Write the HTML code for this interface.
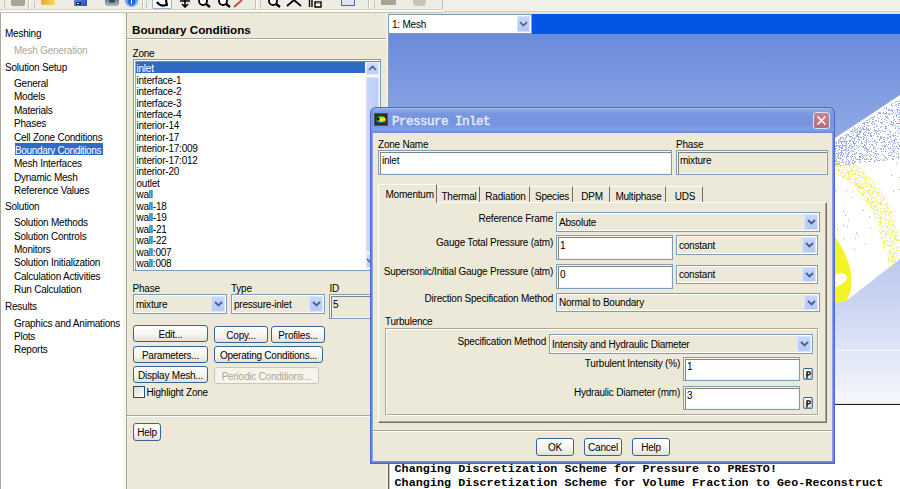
<!DOCTYPE html><html><head><meta charset="utf-8"><style>
*{margin:0;padding:0;box-sizing:content-box}
html,body{width:900px;height:489px;overflow:hidden;background:#ECE9D8;position:relative}
.b{position:absolute}
.t{position:absolute;font-family:"Liberation Sans",sans-serif;font-size:10px;line-height:12px;white-space:nowrap;color:#000;letter-spacing:-0.22px}
.combo{border:1px solid #7F9DB9;font-family:"Liberation Sans",sans-serif;font-size:10px;letter-spacing:-0.22px;box-shadow:inset 0 0 0 1px #fff}
.ctext{position:absolute;left:2px;line-height:12px;white-space:nowrap}
.cbtn{position:absolute;right:1px;top:1px;width:14px;background:linear-gradient(180deg,#C8D7FC 0%,#B4C8F8 100%);border-radius:2px;box-shadow:inset 0 0 0 1px #DCE6FC;display:flex;align-items:center;justify-content:center}
.field{border:1px solid #7F9DB9;font-family:"Liberation Sans",sans-serif;font-size:10px;letter-spacing:-0.22px;box-shadow:inset 1px 1px 0 #F4F4F0,inset 2px 2px 0 #86847A,inset -1px -1px 0 #F4F4F0}
.ftext{position:absolute;left:3px;line-height:12px;white-space:nowrap}
.btn{border:1px solid #3A6496;border-radius:3px;background:linear-gradient(180deg,#FFFFFF 0%,#F4F3EE 60%,#E3E1D6 100%);font-family:"Liberation Sans",sans-serif;font-size:10px;letter-spacing:-0.22px;text-align:center;white-space:nowrap;color:#000}
.dis{border-color:#C9C7BA;background:#F5F4EA;color:#ACA899}
.mono{position:absolute;font-family:"Liberation Mono",monospace;font-weight:bold;font-size:11.7px;line-height:14px;white-space:nowrap;color:#000}
</style></head><body>
<div class="b" style="left:0px;top:0px;width:900px;height:9px;background:#EEEDE4"></div>
<div class="b" style="left:0px;top:9px;width:900px;height:1px;background:#D8D4C4"></div>
<div class="b" style="left:0px;top:10px;width:900px;height:2px;background:#FBFAF6"></div>
<div class="b" style="left:0px;top:12px;width:900px;height:1px;background:#C5C1B0"></div>
<div class="b" style="left:443px;top:0px;width:457px;height:11px;background:#F0EFE8"></div>
<div class="b" style="left:443px;top:11px;width:457px;height:1px;background:#CFCCC0"></div>
<div class="b" style="left:443px;top:12px;width:457px;height:2px;background:#E6E3D4"></div>
<div class="b" style="left:4px;top:1px;width:1px;height:1px;background:#A9A48E"></div>
<div class="b" style="left:4px;top:3px;width:1px;height:1px;background:#A9A48E"></div>
<div class="b" style="left:4px;top:5px;width:1px;height:1px;background:#A9A48E"></div>
<div class="b" style="left:4px;top:7px;width:1px;height:1px;background:#A9A48E"></div>
<div class="b" style="left:28px;top:0px;width:1px;height:9px;background:#C5C1B0"></div>
<div class="b" style="left:29px;top:0px;width:1px;height:9px;background:#FFFFFF"></div>
<div class="b" style="left:34px;top:1px;width:1px;height:1px;background:#A9A48E"></div>
<div class="b" style="left:34px;top:3px;width:1px;height:1px;background:#A9A48E"></div>
<div class="b" style="left:34px;top:5px;width:1px;height:1px;background:#A9A48E"></div>
<div class="b" style="left:34px;top:7px;width:1px;height:1px;background:#A9A48E"></div>
<div class="b" style="left:142px;top:0px;width:1px;height:9px;background:#C5C1B0"></div>
<div class="b" style="left:143px;top:0px;width:1px;height:9px;background:#FFFFFF"></div>
<div class="b" style="left:146px;top:1px;width:1px;height:1px;background:#A9A48E"></div>
<div class="b" style="left:146px;top:3px;width:1px;height:1px;background:#A9A48E"></div>
<div class="b" style="left:146px;top:5px;width:1px;height:1px;background:#A9A48E"></div>
<div class="b" style="left:146px;top:7px;width:1px;height:1px;background:#A9A48E"></div>
<div class="b" style="left:255px;top:0px;width:1px;height:9px;background:#C5C1B0"></div>
<div class="b" style="left:256px;top:0px;width:1px;height:9px;background:#FFFFFF"></div>
<div class="b" style="left:260px;top:1px;width:1px;height:1px;background:#A9A48E"></div>
<div class="b" style="left:260px;top:3px;width:1px;height:1px;background:#A9A48E"></div>
<div class="b" style="left:260px;top:5px;width:1px;height:1px;background:#A9A48E"></div>
<div class="b" style="left:260px;top:7px;width:1px;height:1px;background:#A9A48E"></div>
<div class="b" style="left:368px;top:0px;width:1px;height:9px;background:#C5C1B0"></div>
<div class="b" style="left:369px;top:0px;width:1px;height:9px;background:#FFFFFF"></div>
<div class="b" style="left:374px;top:1px;width:1px;height:1px;background:#A9A48E"></div>
<div class="b" style="left:374px;top:3px;width:1px;height:1px;background:#A9A48E"></div>
<div class="b" style="left:374px;top:5px;width:1px;height:1px;background:#A9A48E"></div>
<div class="b" style="left:374px;top:7px;width:1px;height:1px;background:#A9A48E"></div>
<div class="b" style="left:442px;top:0px;width:1px;height:9px;background:#C5C1B0"></div>
<div class="b" style="left:11px;top:0px;width:14px;height:6px;background:#A8A595;border-radius:0 0 2px 2px"></div>
<div class="b" style="left:41px;top:0px;width:14px;height:5px;background:linear-gradient(90deg,#E8A93A,#F6D55C);border-radius:0 0 2px 2px"></div>
<div class="b" style="left:74px;top:0px;width:13px;height:6px;background:linear-gradient(135deg,#5C86E6,#2B4DB0);border-radius:0 0 1px 1px"></div>
<div class="b" style="left:76px;top:2px;width:5px;height:3px;background:#1E2A55"></div>
<div class="b" style="left:77px;top:3px;width:2px;height:1px;background:#F4F4F4"></div>
<div class="b" style="left:105px;top:0px;width:14px;height:6px;background:linear-gradient(180deg,#6F808C,#A9B6BF);border-radius:0 0 3px 3px"></div>
<div class="b" style="left:109px;top:0px;width:6px;height:3px;background:#3B4852;border-radius:0 0 3px 3px"></div>
<div class="b" style="left:125px;top:0px;width:13px;height:7px;background:radial-gradient(circle at 50% 20%,#2A5FD8 0,#2A5FD8 3px,#8FB0F0 5px,#3F6FD8 7px);border-radius:0 0 7px 7px"></div>
<div class="b" style="left:131px;top:0px;width:1px;height:4px;background:#fff"></div>
<div class="b" style="left:152px;top:0px;width:20px;height:9px;background:#F7F8FC;border:1px solid #9DB0D6;border-top:none;border-radius:0 0 2px 2px;box-sizing:border-box"></div>
<svg class="b" style="left:154px;top:0" width="16" height="8"><path d="M3 2 Q6 7 12 5 M12 0 L13 6" stroke="#000" stroke-width="2.2" fill="none"/></svg>
<svg class="b" style="left:178px;top:0" width="14" height="8"><path d="M7 0 V7 M4 4 L7 7 L10 4 M2 1 H12" stroke="#000" stroke-width="1.6" fill="none"/></svg>
<svg class="b" style="left:196px;top:0" width="16" height="8"><circle cx="7" cy="1" r="4" stroke="#000" stroke-width="1.8" fill="#fff"/><path d="M10 4 L14 7" stroke="#000" stroke-width="2.2"/></svg>
<svg class="b" style="left:216px;top:0" width="16" height="8"><circle cx="7" cy="1" r="4" stroke="#000" stroke-width="1.8" fill="#fff"/><path d="M10 4 L14 7" stroke="#000" stroke-width="2.2"/></svg>
<svg class="b" style="left:232px;top:0" width="14" height="8"><path d="M2 7 L10 0" stroke="#C0504D" stroke-width="2"/></svg>
<svg class="b" style="left:266px;top:0" width="16" height="8"><circle cx="7" cy="1" r="4" stroke="#000" stroke-width="1.8" fill="#fff"/><path d="M10 4 L14 7" stroke="#000" stroke-width="2.2"/></svg>
<svg class="b" style="left:286px;top:0" width="18" height="8"><path d="M1 6 L8 0 L15 6" stroke="#000" stroke-width="1.8" fill="none"/></svg>
<svg class="b" style="left:308px;top:0" width="16" height="8"><path d="M1.5 0 V7 M4 0 V7 M7 2 H13 V7 H7 Z" stroke="#000" stroke-width="1.4" fill="#fff"/><rect x="8" y="2.5" width="4" height="1.5" fill="#8DBA6A"/></svg>
<div class="b" style="left:341px;top:0px;width:12px;height:5px;background:#DFE4F8;border:1px solid #5C5FA0;border-top:none"></div>
<div class="b" style="left:381px;top:0px;width:15px;height:5px;background:#A8A595"></div>
<div class="b" style="left:413px;top:0px;width:13px;height:6px;background:#C9C6B8;border-radius:0 0 4px 4px"></div>
<div class="b" style="left:0px;top:13px;width:123px;height:476px;background:#FFFFFF"></div>
<div class="b" style="left:0px;top:13px;width:1px;height:476px;background:#ACA899"></div>
<div class="b" style="left:123px;top:13px;width:3px;height:476px;background:#F5F4EE"></div>
<div class="b" style="left:126px;top:13px;width:1px;height:476px;background:#ACA899"></div>
<div class="t" style="left:5px;top:27.5px;color:#000">Meshing</div>
<div class="t" style="left:14px;top:44.5px;color:#ACA899">Mesh Generation</div>
<div class="t" style="left:5px;top:61.5px;color:#000">Solution Setup</div>
<div class="t" style="left:14px;top:78.0px;color:#000">General</div>
<div class="t" style="left:14px;top:91.4px;color:#000">Models</div>
<div class="t" style="left:14px;top:104.8px;color:#000">Materials</div>
<div class="t" style="left:14px;top:118.2px;color:#000">Phases</div>
<div class="t" style="left:14px;top:131.6px;color:#000">Cell Zone Conditions</div>
<div class="b" style="left:15px;top:143px;width:88px;height:12px;background:#316AC5"></div>
<div class="t" style="left:15px;top:145.0px;color:#fff;letter-spacing:-0.35px">Boundary Conditions</div>
<div class="t" style="left:14px;top:158.4px;color:#000">Mesh Interfaces</div>
<div class="t" style="left:14px;top:171.8px;color:#000">Dynamic Mesh</div>
<div class="t" style="left:14px;top:185.2px;color:#000">Reference Values</div>
<div class="t" style="left:5px;top:201.0px;color:#000">Solution</div>
<div class="t" style="left:14px;top:217.2px;color:#000">Solution Methods</div>
<div class="t" style="left:14px;top:230.6px;color:#000">Solution Controls</div>
<div class="t" style="left:14px;top:244.0px;color:#000">Monitors</div>
<div class="t" style="left:14px;top:257.4px;color:#000">Solution Initialization</div>
<div class="t" style="left:14px;top:270.8px;color:#000">Calculation Activities</div>
<div class="t" style="left:14px;top:284.2px;color:#000">Run Calculation</div>
<div class="t" style="left:5px;top:300.5px;color:#000">Results</div>
<div class="t" style="left:14px;top:317.5px;color:#000">Graphics and Animations</div>
<div class="t" style="left:14px;top:330.8px;color:#000">Plots</div>
<div class="t" style="left:14px;top:344.1px;color:#000">Reports</div>
<div class="t" style="left:132px;top:23.5px;font-weight:bold;font-size:11.7px;letter-spacing:0">Boundary Conditions</div>
<div class="b" style="left:127px;top:38px;width:261px;height:1px;background:#ACA899"></div>
<div class="b" style="left:127px;top:39px;width:261px;height:1px;background:#FFFFFF"></div>
<div class="t" style="left:132.5px;top:48.0px;">Zone</div>
<div class="b" style="left:133px;top:59px;width:248px;height:212px;background:#FFFFFF;border:1px solid #7F9DB9;box-sizing:border-box"></div>
<div class="b" style="left:135px;top:61px;width:245px;height:1px;background:#8A887C"></div>
<div class="b" style="left:135px;top:61px;width:1px;height:209px;background:#A8A699"></div>
<div class="b" style="left:136px;top:62px;width:229px;height:11px;background:#316AC5"></div>
<div class="t" style="left:136.5px;top:63.1px;color:#fff">inlet</div>
<div class="t" style="left:136.5px;top:74.6px;color:#000">interface-1</div>
<div class="t" style="left:136.5px;top:86.0px;color:#000">interface-2</div>
<div class="t" style="left:136.5px;top:97.5px;color:#000">interface-3</div>
<div class="t" style="left:136.5px;top:109.0px;color:#000">interface-4</div>
<div class="t" style="left:136.5px;top:120.4px;color:#000">interior-14</div>
<div class="t" style="left:136.5px;top:131.9px;color:#000">interior-17</div>
<div class="t" style="left:136.5px;top:143.4px;color:#000">interior-17:009</div>
<div class="t" style="left:136.5px;top:154.9px;color:#000">interior-17:012</div>
<div class="t" style="left:136.5px;top:166.3px;color:#000">interior-20</div>
<div class="t" style="left:136.5px;top:177.8px;color:#000">outlet</div>
<div class="t" style="left:136.5px;top:189.3px;color:#000">wall</div>
<div class="t" style="left:136.5px;top:200.7px;color:#000">wall-18</div>
<div class="t" style="left:136.5px;top:212.2px;color:#000">wall-19</div>
<div class="t" style="left:136.5px;top:223.7px;color:#000">wall-21</div>
<div class="t" style="left:136.5px;top:235.2px;color:#000">wall-22</div>
<div class="t" style="left:136.5px;top:246.6px;color:#000">wall:007</div>
<div class="t" style="left:136.5px;top:258.1px;color:#000">wall:008</div>
<div class="b" style="left:365px;top:62px;width:15px;height:208px;background:#F7F6F1"></div>
<div class="b" style="left:366px;top:62px;width:13px;height:13px;background:linear-gradient(180deg,#D3DEFC,#B9CCF9);border-radius:2px;box-shadow:inset 0 0 0 1px #E4EBFC"></div>
<svg class="b" style="left:368px;top:65px" width="9" height="6"><path d="M1 5 L4.5 1.5 L8 5" stroke="#4D6185" stroke-width="1.6" fill="none"/></svg>
<div class="b" style="left:366px;top:77px;width:13px;height:175px;background:linear-gradient(90deg,#C8D7FB,#BACCF8);border-radius:2px;box-shadow:inset 0 0 0 1px #DCE5FC"></div>
<div class="b" style="left:366px;top:253px;width:13px;height:15px;background:linear-gradient(180deg,#D3DEFC,#B9CCF9);border-radius:2px;box-shadow:inset 0 0 0 1px #E4EBFC"></div>
<svg class="b" style="left:366px;top:258px" width="9" height="6"><path d="M1 1 L4.5 4.5 L8 1" stroke="#4D6185" stroke-width="1.6" fill="none"/></svg>
<div class="t" style="left:132.5px;top:283.0px;">Phase</div>
<div class="t" style="left:231px;top:283.0px;">Type</div>
<div class="t" style="left:329.5px;top:283.0px;">ID</div>
<div class="b combo" style="left:133px;top:294px;width:92px;height:18px;background:#ECE9D8"><div class="ctext" style="top:3.5px">mixture</div><div class="cbtn" style="height:16px"><svg width="9" height="6" viewBox="0 0 9 6"><path d="M1 1 L4.5 4.5 L8 1" stroke="#4D6185" stroke-width="1.9" fill="none"/></svg></div></div>
<div class="b combo" style="left:231px;top:294px;width:92px;height:18px;background:#ECE9D8"><div class="ctext" style="top:3.5px">pressure-inlet</div><div class="cbtn" style="height:16px"><svg width="9" height="6" viewBox="0 0 9 6"><path d="M1 1 L4.5 4.5 L8 1" stroke="#4D6185" stroke-width="1.9" fill="none"/></svg></div></div>
<div class="b field" style="left:329px;top:294px;width:48px;height:23px;background:#ECE9D8"><div class="ftext" style="top:4px">5</div></div>
<div class="b btn" style="left:133px;top:325px;width:73px;height:14px;padding-top:1px;line-height:15px">Edit...</div>
<div class="b btn" style="left:214px;top:326px;width:52px;height:14px;padding-top:1px;line-height:15px">Copy...</div>
<div class="b btn" style="left:271px;top:326px;width:52px;height:14px;padding-top:1px;line-height:15px">Profiles...</div>
<div class="b btn" style="left:133px;top:346px;width:73px;height:14px;padding-top:1px;line-height:15px">Parameters...</div>
<div class="b btn" style="left:214px;top:346px;width:107px;height:14px;padding-top:1px;line-height:15px">Operating Conditions...</div>
<div class="b btn" style="left:133px;top:366px;width:73px;height:14px;padding-top:1px;line-height:15px">Display Mesh...</div>
<div class="b btn dis" style="left:214px;top:367px;width:103px;height:14px;padding-top:1px;line-height:15px">Periodic Conditions...</div>
<div class="b" style="left:133px;top:386px;width:12px;height:12px;background:linear-gradient(135deg,#DCDBD5,#FFFFFF);border:1px solid #1C5180;box-sizing:border-box"></div>
<div class="t" style="left:146.5px;top:387.0px;">Highlight Zone</div>
<div class="b" style="left:127px;top:415px;width:261px;height:1px;background:#ACA899"></div>
<div class="b" style="left:127px;top:416px;width:261px;height:1px;background:#FFFFFF"></div>
<div class="b btn" style="left:133px;top:423px;width:26px;height:15px;padding-top:1px;line-height:16px">Help</div>
<div class="b" style="left:388px;top:13px;width:512px;height:1px;background:#E6E3D4"></div>
<div class="b" style="left:388px;top:34px;width:512px;height:370px;background:linear-gradient(180deg,#6A8BDB 0px,#86A0E2 73px,#CBD5F2 269px,#F6F7FD 369px)"></div>
<div class="b" style="left:388px;top:14px;width:512px;height:20px;background:#0055E5"></div>
<div class="b" style="left:388px;top:14px;width:144px;height:20px;background:#FFFFFF;border:1px solid #7F9DB9;box-sizing:border-box"></div>
<div class="t" style="left:392px;top:18.5px;">1: Mesh</div>
<div class="b" style="left:517px;top:16px;width:13px;height:16px;background:linear-gradient(180deg,#C6D5FC,#B2C7F8);border-radius:2px;box-shadow:inset 0 0 0 1px #D6E1FB"></div>
<svg class="b" style="left:519px;top:21px" width="9" height="6"><path d="M1 1 L4.5 4.5 L8 1" stroke="#4D6185" stroke-width="1.6" fill="none"/></svg>
<div class="b" style="left:836px;top:350px;width:64px;height:1px;background:#F8F9FE"></div>
<div class="b" style="left:386px;top:13px;width:2px;height:476px;background:#F3F1E7"></div>
<div class="b" style="left:388px;top:34px;width:1px;height:370px;background:#8E9BBA"></div>
<svg class="b" style="left:835px;top:90px" width="65" height="220" viewBox="835 90 65 220"><polygon points="835,138 900,95 900,259 846,301 835,303" fill="#FFFFFF"/><path d="M847 134h1v1h-1zM899 103h1v1h-1zM888 110h1v1h-1zM889 136h1v1h-1zM863 146h1v1h-1zM842 147h1v1h-1zM863 157h1v1h-1zM872 141h1v1h-1zM874 146h1v1h-1zM848 152h1v1h-1zM882 146h1v1h-1zM842 150h1v1h-1zM889 130h1v1h-1zM893 116h1v1h-1zM858 134h1v1h-1zM873 156h1v1h-1zM892 158h1v1h-1zM850 136h1v1h-1zM878 136h1v1h-1zM875 130h1v1h-1zM898 126h1v1h-1zM846 190h1v1h-1zM842 145h1v1h-1zM892 125h1v1h-1zM879 134h1v1h-1zM856 145h1v1h-1zM862 128h1v1h-1zM866 159h1v1h-1zM898 126h1v1h-1zM870 227h1v1h-1zM870 161h1v1h-1zM864 122h1v1h-1zM858 125h1v1h-1zM888 138h1v1h-1zM841 161h1v1h-1zM885 128h1v1h-1zM896 104h1v1h-1zM841 153h1v1h-1zM861 129h1v1h-1zM849 164h1v1h-1zM894 119h1v1h-1zM853 141h1v1h-1zM868 149h1v1h-1zM837 164h1v1h-1zM881 137h1v1h-1zM838 146h1v1h-1zM846 141h1v1h-1zM899 112h1v1h-1zM859 156h1v1h-1zM864 141h1v1h-1zM859 161h1v1h-1zM892 144h1v1h-1zM864 135h1v1h-1zM896 153h1v1h-1zM835 157h1v1h-1zM845 138h1v1h-1zM884 147h1v1h-1zM896 163h1v1h-1zM846 163h1v1h-1zM885 146h1v1h-1zM845 139h1v1h-1zM851 150h1v1h-1zM894 110h1v1h-1zM895 121h1v1h-1zM851 157h1v1h-1zM848 162h1v1h-1zM890 131h1v1h-1zM838 146h1v1h-1zM865 134h1v1h-1zM888 109h1v1h-1zM880 203h1v1h-1zM888 153h1v1h-1zM851 148h1v1h-1zM837 229h1v1h-1zM854 145h1v1h-1zM850 141h1v1h-1zM896 106h1v1h-1zM842 144h1v1h-1zM847 150h1v1h-1zM843 153h1v1h-1zM899 110h1v1h-1zM870 141h1v1h-1zM896 115h1v1h-1zM892 110h1v1h-1zM891 141h1v1h-1zM889 141h1v1h-1zM850 148h1v1h-1zM881 154h1v1h-1zM894 156h1v1h-1zM885 129h1v1h-1zM863 139h1v1h-1zM886 117h1v1h-1zM875 131h1v1h-1zM878 133h1v1h-1zM837 153h1v1h-1zM872 119h1v1h-1zM840 157h1v1h-1zM889 142h1v1h-1zM868 142h1v1h-1zM898 104h1v1h-1zM842 141h1v1h-1zM844 135h1v1h-1zM846 136h1v1h-1zM863 157h1v1h-1zM893 159h1v1h-1zM858 137h1v1h-1zM874 124h1v1h-1zM892 113h1v1h-1zM879 160h1v1h-1zM839 158h1v1h-1zM859 134h1v1h-1zM892 149h1v1h-1zM890 134h1v1h-1zM864 155h1v1h-1zM852 141h1v1h-1zM841 137h1v1h-1zM867 122h1v1h-1zM866 122h1v1h-1zM858 142h1v1h-1zM868 133h1v1h-1zM876 159h1v1h-1zM874 123h1v1h-1zM877 136h1v1h-1zM899 113h1v1h-1zM835 161h1v1h-1zM853 130h1v1h-1zM837 156h1v1h-1zM845 150h1v1h-1zM854 153h1v1h-1zM884 146h1v1h-1zM898 142h1v1h-1zM853 158h1v1h-1zM889 149h1v1h-1zM837 154h1v1h-1zM864 123h1v1h-1zM841 154h1v1h-1zM866 120h1v1h-1zM843 150h1v1h-1zM846 135h1v1h-1zM895 105h1v1h-1zM868 151h1v1h-1zM864 161h1v1h-1zM898 103h1v1h-1zM871 144h1v1h-1zM860 130h1v1h-1zM867 149h1v1h-1zM852 131h1v1h-1zM897 130h1v1h-1zM894 146h1v1h-1zM860 127h1v1h-1zM895 127h1v1h-1zM846 149h1v1h-1zM881 151h1v1h-1zM897 109h1v1h-1zM897 123h1v1h-1zM853 142h1v1h-1zM850 131h1v1h-1zM878 118h1v1h-1zM860 159h1v1h-1zM872 119h1v1h-1zM889 152h1v1h-1zM870 154h1v1h-1zM871 123h1v1h-1zM869 132h1v1h-1zM882 131h1v1h-1zM838 155h1v1h-1zM861 125h1v1h-1zM887 146h1v1h-1zM871 158h1v1h-1zM851 144h1v1h-1zM871 150h1v1h-1zM868 129h1v1h-1zM896 123h1v1h-1zM856 129h1v1h-1zM859 131h1v1h-1zM846 145h1v1h-1zM887 117h1v1h-1zM869 121h1v1h-1zM870 133h1v1h-1zM899 146h1v1h-1zM862 158h1v1h-1zM884 131h1v1h-1zM874 155h1v1h-1zM837 150h1v1h-1zM854 162h1v1h-1zM848 220h1v1h-1zM893 146h1v1h-1zM835 146h1v1h-1zM839 146h1v1h-1zM851 148h1v1h-1zM890 110h1v1h-1zM844 163h1v1h-1zM859 133h1v1h-1zM835 148h1v1h-1zM893 120h1v1h-1zM866 130h1v1h-1zM866 137h1v1h-1zM874 124h1v1h-1zM888 118h1v1h-1zM878 130h1v1h-1zM885 149h1v1h-1zM899 128h1v1h-1zM860 156h1v1h-1zM864 132h1v1h-1zM872 144h1v1h-1zM858 186h1v1h-1zM862 146h1v1h-1zM888 109h1v1h-1zM885 145h1v1h-1zM875 161h1v1h-1zM856 133h1v1h-1zM894 140h1v1h-1zM883 159h1v1h-1zM891 104h1v1h-1zM870 136h1v1h-1zM850 156h1v1h-1zM883 151h1v1h-1zM890 143h1v1h-1zM860 160h1v1h-1zM859 153h1v1h-1zM895 125h1v1h-1zM886 109h1v1h-1zM843 137h1v1h-1zM859 159h1v1h-1zM878 128h1v1h-1zM840 157h1v1h-1zM875 153h1v1h-1zM843 142h1v1h-1zM895 128h1v1h-1zM884 156h1v1h-1zM898 128h1v1h-1zM836 159h1v1h-1zM854 140h1v1h-1zM875 151h1v1h-1zM845 146h1v1h-1zM855 130h1v1h-1zM839 153h1v1h-1zM855 238h1v1h-1zM868 128h1v1h-1zM888 144h1v1h-1zM892 110h1v1h-1zM893 140h1v1h-1zM850 140h1v1h-1zM870 134h1v1h-1zM868 129h1v1h-1zM866 132h1v1h-1zM859 140h1v1h-1zM866 130h1v1h-1zM847 164h1v1h-1zM848 160h1v1h-1zM864 159h1v1h-1zM859 171h1v1h-1zM892 146h1v1h-1zM835 155h1v1h-1zM879 130h1v1h-1zM853 163h1v1h-1zM839 156h1v1h-1zM861 155h1v1h-1zM887 116h1v1h-1zM874 116h1v1h-1zM898 103h1v1h-1zM847 154h1v1h-1zM854 131h1v1h-1zM855 137h1v1h-1zM871 135h1v1h-1zM841 153h1v1h-1zM880 112h1v1h-1zM881 130h1v1h-1zM886 107h1v1h-1zM855 157h1v1h-1zM886 126h1v1h-1zM855 129h1v1h-1zM853 160h1v1h-1zM846 162h1v1h-1zM899 119h1v1h-1zM855 161h1v1h-1zM848 156h1v1h-1zM860 156h1v1h-1zM884 145h1v1h-1zM855 158h1v1h-1zM886 117h1v1h-1zM895 113h1v1h-1zM854 154h1v1h-1zM859 146h1v1h-1zM839 147h1v1h-1zM884 137h1v1h-1zM874 129h1v1h-1zM866 148h1v1h-1zM892 113h1v1h-1zM835 153h1v1h-1zM865 146h1v1h-1zM893 148h1v1h-1zM886 114h1v1h-1zM890 148h1v1h-1zM899 101h1v1h-1zM851 155h1v1h-1zM845 149h1v1h-1zM883 149h1v1h-1zM838 255h1v1h-1zM849 163h1v1h-1zM897 147h1v1h-1zM856 153h1v1h-1zM863 136h1v1h-1zM867 158h1v1h-1zM896 116h1v1h-1zM899 121h1v1h-1zM860 130h1v1h-1zM870 157h1v1h-1zM856 136h1v1h-1zM841 147h1v1h-1zM892 135h1v1h-1zM848 149h1v1h-1zM885 127h1v1h-1zM845 139h1v1h-1zM841 151h1v1h-1zM874 160h1v1h-1zM875 149h1v1h-1zM863 147h1v1h-1zM890 124h1v1h-1zM841 143h1v1h-1zM840 137h1v1h-1zM880 137h1v1h-1zM863 134h1v1h-1zM852 151h1v1h-1zM895 102h1v1h-1zM866 139h1v1h-1zM843 161h1v1h-1zM869 130h1v1h-1zM836 161h1v1h-1zM879 140h1v1h-1zM898 153h1v1h-1zM840 138h1v1h-1zM858 127h1v1h-1zM848 150h1v1h-1zM860 132h1v1h-1zM899 123h1v1h-1zM857 128h1v1h-1zM835 151h1v1h-1zM894 139h1v1h-1zM857 130h1v1h-1zM864 126h1v1h-1zM868 130h1v1h-1zM890 155h1v1h-1zM868 159h1v1h-1zM862 143h1v1h-1zM856 135h1v1h-1zM884 121h1v1h-1zM895 132h1v1h-1zM835 190h1v1h-1zM874 133h1v1h-1zM844 140h1v1h-1zM839 141h1v1h-1zM855 132h1v1h-1zM838 142h1v1h-1zM840 158h1v1h-1zM843 225h1v1h-1zM884 119h1v1h-1zM849 162h1v1h-1zM846 153h1v1h-1zM871 123h1v1h-1zM861 137h1v1h-1zM868 130h1v1h-1zM871 151h1v1h-1zM876 142h1v1h-1zM887 134h1v1h-1zM847 155h1v1h-1zM862 156h1v1h-1zM871 117h1v1h-1zM860 153h1v1h-1zM841 150h1v1h-1zM897 148h1v1h-1zM898 156h1v1h-1zM868 126h1v1h-1zM845 164h1v1h-1zM848 143h1v1h-1zM886 234h1v1h-1zM868 142h1v1h-1zM856 159h1v1h-1zM839 147h1v1h-1zM876 134h1v1h-1zM867 125h1v1h-1zM894 141h1v1h-1zM899 116h1v1h-1zM854 162h1v1h-1zM876 130h1v1h-1zM865 129h1v1h-1zM848 153h1v1h-1zM860 162h1v1h-1zM873 135h1v1h-1zM860 159h1v1h-1zM870 135h1v1h-1zM839 161h1v1h-1zM890 132h1v1h-1zM872 122h1v1h-1zM886 120h1v1h-1zM890 137h1v1h-1zM888 142h1v1h-1zM864 148h1v1h-1zM893 117h1v1h-1zM855 143h1v1h-1zM893 151h1v1h-1zM862 154h1v1h-1zM860 128h1v1h-1zM893 143h1v1h-1zM837 161h1v1h-1zM878 158h1v1h-1zM850 151h1v1h-1zM842 147h1v1h-1zM842 148h1v1h-1zM888 142h1v1h-1zM868 132h1v1h-1zM885 116h1v1h-1zM843 154h1v1h-1zM895 143h1v1h-1zM853 151h1v1h-1zM887 122h1v1h-1zM851 146h1v1h-1zM864 137h1v1h-1zM870 146h1v1h-1zM876 134h1v1h-1zM845 145h1v1h-1zM873 121h1v1h-1zM876 120h1v1h-1zM879 112h1v1h-1zM836 142h1v1h-1zM872 121h1v1h-1zM854 142h1v1h-1zM856 152h1v1h-1zM846 161h1v1h-1zM873 147h1v1h-1zM845 147h1v1h-1zM849 140h1v1h-1zM864 141h1v1h-1zM842 162h1v1h-1zM897 109h1v1h-1zM835 149h1v1h-1zM898 149h1v1h-1zM882 160h1v1h-1zM844 145h1v1h-1zM838 140h1v1h-1zM877 117h1v1h-1zM896 153h1v1h-1zM839 149h1v1h-1zM851 159h1v1h-1zM881 149h1v1h-1zM861 137h1v1h-1zM867 155h1v1h-1zM872 138h1v1h-1zM877 126h1v1h-1zM899 110h1v1h-1zM898 119h1v1h-1zM875 120h1v1h-1zM846 134h1v1h-1zM886 109h1v1h-1zM873 117h1v1h-1zM895 139h1v1h-1zM899 189h1v1h-1zM845 154h1v1h-1zM893 112h1v1h-1zM836 161h1v1h-1zM874 127h1v1h-1zM873 117h1v1h-1zM837 156h1v1h-1zM841 151h1v1h-1zM850 145h1v1h-1zM886 108h1v1h-1zM884 160h1v1h-1zM854 143h1v1h-1zM848 147h1v1h-1zM854 143h1v1h-1zM836 143h1v1h-1zM846 137h1v1h-1zM895 143h1v1h-1zM866 151h1v1h-1zM841 158h1v1h-1zM853 132h1v1h-1zM898 154h1v1h-1zM842 155h1v1h-1zM845 143h1v1h-1zM856 232h1v1h-1zM875 141h1v1h-1zM891 113h1v1h-1zM849 152h1v1h-1zM888 148h1v1h-1zM872 144h1v1h-1zM854 139h1v1h-1zM883 155h1v1h-1zM892 103h1v1h-1zM868 125h1v1h-1zM840 141h1v1h-1zM853 158h1v1h-1zM898 104h1v1h-1zM897 111h1v1h-1zM864 124h1v1h-1zM885 118h1v1h-1zM867 120h1v1h-1zM884 113h1v1h-1zM880 122h1v1h-1zM860 131h1v1h-1zM858 136h1v1h-1zM880 136h1v1h-1zM854 161h1v1h-1zM898 105h1v1h-1zM894 110h1v1h-1zM838 152h1v1h-1zM837 145h1v1h-1zM897 112h1v1h-1zM870 159h1v1h-1zM851 131h1v1h-1zM839 162h1v1h-1zM893 150h1v1h-1zM843 211h1v1h-1zM846 151h1v1h-1zM892 124h1v1h-1zM838 140h1v1h-1zM896 109h1v1h-1zM891 109h1v1h-1zM876 132h1v1h-1zM882 118h1v1h-1zM865 159h1v1h-1zM836 163h1v1h-1zM839 161h1v1h-1zM844 238h1v1h-1zM852 162h1v1h-1zM884 141h1v1h-1zM849 136h1v1h-1zM863 129h1v1h-1zM892 111h1v1h-1zM854 143h1v1h-1zM854 148h1v1h-1zM872 124h1v1h-1zM897 126h1v1h-1zM896 157h1v1h-1zM842 159h1v1h-1zM862 156h1v1h-1zM850 137h1v1h-1zM881 123h1v1h-1zM855 153h1v1h-1zM872 145h1v1h-1zM891 122h1v1h-1zM852 156h1v1h-1zM871 136h1v1h-1zM887 137h1v1h-1zM852 147h1v1h-1zM864 129h1v1h-1zM845 161h1v1h-1zM898 109h1v1h-1zM852 154h1v1h-1zM859 132h1v1h-1zM843 150h1v1h-1zM842 146h1v1h-1zM871 155h1v1h-1zM898 123h1v1h-1zM896 139h1v1h-1zM866 155h1v1h-1zM881 145h1v1h-1zM835 164h1v1h-1zM844 156h1v1h-1zM876 155h1v1h-1zM842 139h1v1h-1zM898 100h1v1h-1zM852 162h1v1h-1zM863 129h1v1h-1zM874 153h1v1h-1zM838 163h1v1h-1zM859 157h1v1h-1zM894 142h1v1h-1zM848 135h1v1h-1zM857 131h1v1h-1zM898 144h1v1h-1zM849 145h1v1h-1zM852 137h1v1h-1zM864 145h1v1h-1zM885 151h1v1h-1zM884 139h1v1h-1zM839 163h1v1h-1zM881 122h1v1h-1zM877 153h1v1h-1zM876 154h1v1h-1zM841 141h1v1h-1zM880 132h1v1h-1zM836 153h1v1h-1zM843 141h1v1h-1zM837 150h1v1h-1zM885 157h1v1h-1zM840 162h1v1h-1zM840 155h1v1h-1zM869 201h1v1h-1zM839 145h1v1h-1zM836 164h1v1h-1zM871 132h1v1h-1zM856 148h1v1h-1zM869 144h1v1h-1zM853 146h1v1h-1zM846 142h1v1h-1zM893 135h1v1h-1zM884 145h1v1h-1zM874 130h1v1h-1zM859 139h1v1h-1zM885 126h1v1h-1zM865 134h1v1h-1zM869 161h1v1h-1zM872 117h1v1h-1zM843 145h1v1h-1zM842 160h1v1h-1zM880 116h1v1h-1zM863 210h1v1h-1zM888 125h1v1h-1zM860 157h1v1h-1zM847 156h1v1h-1zM895 137h1v1h-1zM851 133h1v1h-1zM887 138h1v1h-1zM898 158h1v1h-1zM854 156h1v1h-1zM849 146h1v1h-1zM893 122h1v1h-1zM880 138h1v1h-1zM884 108h1v1h-1zM898 117h1v1h-1zM873 135h1v1h-1zM883 113h1v1h-1zM877 153h1v1h-1zM836 146h1v1h-1zM898 131h1v1h-1zM874 161h1v1h-1zM890 124h1v1h-1zM879 112h1v1h-1zM843 138h1v1h-1zM882 142h1v1h-1zM891 154h1v1h-1zM878 148h1v1h-1zM846 143h1v1h-1zM844 150h1v1h-1zM849 141h1v1h-1zM878 160h1v1h-1zM888 134h1v1h-1zM861 131h1v1h-1zM858 147h1v1h-1zM848 164h1v1h-1zM840 137h1v1h-1zM835 158h1v1h-1zM836 145h1v1h-1zM898 133h1v1h-1zM853 143h1v1h-1zM850 148h1v1h-1zM848 134h1v1h-1zM897 136h1v1h-1zM842 156h1v1h-1zM876 125h1v1h-1zM870 129h1v1h-1zM859 139h1v1h-1zM841 148h1v1h-1zM840 154h1v1h-1zM866 127h1v1h-1zM857 159h1v1h-1zM893 136h1v1h-1zM898 107h1v1h-1zM863 138h1v1h-1zM897 151h1v1h-1zM846 144h1v1h-1zM858 159h1v1h-1zM885 113h1v1h-1zM884 142h1v1h-1zM850 161h1v1h-1zM866 140h1v1h-1zM879 113h1v1h-1zM838 143h1v1h-1zM851 139h1v1h-1zM851 146h1v1h-1zM865 135h1v1h-1zM886 158h1v1h-1zM861 142h1v1h-1zM861 141h1v1h-1zM891 124h1v1h-1zM866 141h1v1h-1zM869 151h1v1h-1zM838 154h1v1h-1zM874 148h1v1h-1zM857 135h1v1h-1zM859 129h1v1h-1zM881 148h1v1h-1zM859 137h1v1h-1zM863 155h1v1h-1zM886 128h1v1h-1zM894 152h1v1h-1zM879 113h1v1h-1zM894 150h1v1h-1zM869 216h1v1h-1zM840 154h1v1h-1zM890 121h1v1h-1zM883 137h1v1h-1zM857 134h1v1h-1zM898 114h1v1h-1zM890 136h1v1h-1zM835 160h1v1h-1zM875 157h1v1h-1zM846 156h1v1h-1zM863 126h1v1h-1zM889 123h1v1h-1zM899 148h1v1h-1zM892 141h1v1h-1zM861 143h1v1h-1zM851 136h1v1h-1zM868 126h1v1h-1zM865 131h1v1h-1zM842 146h1v1h-1zM846 143h1v1h-1zM852 146h1v1h-1zM896 114h1v1h-1zM891 139h1v1h-1zM873 148h1v1h-1zM865 154h1v1h-1zM889 114h1v1h-1zM854 144h1v1h-1zM886 113h1v1h-1zM872 138h1v1h-1zM840 145h1v1h-1zM860 136h1v1h-1zM849 146h1v1h-1zM881 138h1v1h-1zM840 165h1v1h-1zM897 142h1v1h-1zM868 140h1v1h-1zM890 147h1v1h-1zM876 157h1v1h-1zM871 159h1v1h-1zM867 123h1v1h-1zM838 149h1v1h-1zM853 135h1v1h-1zM856 153h1v1h-1zM874 130h1v1h-1zM858 139h1v1h-1zM864 144h1v1h-1zM882 122h1v1h-1zM842 152h1v1h-1zM898 158h1v1h-1zM845 141h1v1h-1zM852 163h1v1h-1zM862 123h1v1h-1zM889 109h1v1h-1zM842 148h1v1h-1zM878 112h1v1h-1zM891 141h1v1h-1zM860 145h1v1h-1zM893 133h1v1h-1zM854 249h1v1h-1zM842 145h1v1h-1zM873 135h1v1h-1zM882 142h1v1h-1zM873 187h1v1h-1zM859 153h1v1h-1zM845 152h1v1h-1zM888 118h1v1h-1zM891 110h1v1h-1zM858 150h1v1h-1zM867 129h1v1h-1zM893 135h1v1h-1zM849 161h1v1h-1zM845 215h1v1h-1zM852 197h1v1h-1zM849 163h1v1h-1zM848 154h1v1h-1zM846 157h1v1h-1zM842 137h1v1h-1zM840 154h1v1h-1zM862 127h1v1h-1zM852 160h1v1h-1zM860 160h1v1h-1zM880 148h1v1h-1zM878 148h1v1h-1zM836 143h1v1h-1zM882 136h1v1h-1zM880 113h1v1h-1zM880 138h1v1h-1zM849 161h1v1h-1zM866 128h1v1h-1zM892 159h1v1h-1zM891 105h1v1h-1zM849 140h1v1h-1zM854 138h1v1h-1zM883 139h1v1h-1zM867 149h1v1h-1zM854 145h1v1h-1zM839 139h1v1h-1zM858 150h1v1h-1zM885 158h1v1h-1zM892 152h1v1h-1zM844 150h1v1h-1zM856 153h1v1h-1zM877 131h1v1h-1zM880 127h1v1h-1zM896 101h1v1h-1zM893 191h1v1h-1zM853 138h1v1h-1zM847 226h1v1h-1zM847 141h1v1h-1zM865 244h1v1h-1zM866 143h1v1h-1zM886 144h1v1h-1zM866 162h1v1h-1zM854 128h1v1h-1zM893 125h1v1h-1zM874 141h1v1h-1zM878 121h1v1h-1zM845 143h1v1h-1zM880 159h1v1h-1zM889 155h1v1h-1zM897 110h1v1h-1zM867 152h1v1h-1zM869 119h1v1h-1zM841 142h1v1h-1zM878 112h1v1h-1zM869 156h1v1h-1zM838 149h1v1h-1zM878 154h1v1h-1zM840 154h1v1h-1zM898 157h1v1h-1zM836 148h1v1h-1zM875 143h1v1h-1zM877 114h1v1h-1zM861 153h1v1h-1zM846 144h1v1h-1zM879 140h1v1h-1zM854 149h1v1h-1zM877 142h1v1h-1zM896 146h1v1h-1zM874 140h1v1h-1zM893 123h1v1h-1zM870 118h1v1h-1zM895 148h1v1h-1zM881 142h1v1h-1zM886 112h1v1h-1zM838 142h1v1h-1zM899 145h1v1h-1zM857 234h1v1h-1zM838 157h1v1h-1zM891 175h1v1h-1zM838 158h1v1h-1zM843 162h1v1h-1zM879 139h1v1h-1zM887 159h1v1h-1zM863 123h1v1h-1zM890 124h1v1h-1zM876 144h1v1h-1zM873 182h1v1h-1zM855 161h1v1h-1zM846 148h1v1h-1zM866 149h1v1h-1zM892 106h1v1h-1zM891 152h1v1h-1zM873 152h1v1h-1zM854 127h1v1h-1zM854 140h1v1h-1zM856 141h1v1h-1zM888 155h1v1h-1zM865 147h1v1h-1zM836 153h1v1h-1zM864 150h1v1h-1zM837 163h1v1h-1zM852 129h1v1h-1zM863 128h1v1h-1zM899 177h1v1h-1zM844 141h1v1h-1zM863 133h1v1h-1zM857 136h1v1h-1zM840 139h1v1h-1zM881 126h1v1h-1zM840 152h1v1h-1zM877 160h1v1h-1zM869 132h1v1h-1zM888 114h1v1h-1zM884 222h1v1h-1zM835 153h1v1h-1zM867 150h1v1h-1zM865 148h1v1h-1zM846 158h1v1h-1zM841 152h1v1h-1zM891 121h1v1h-1zM835 157h1v1h-1zM895 135h1v1h-1zM883 141h1v1h-1zM883 112h1v1h-1zM869 148h1v1h-1zM876 151h1v1h-1zM863 129h1v1h-1zM881 137h1v1h-1zM881 119h1v1h-1zM893 156h1v1h-1zM840 147h1v1h-1zM889 113h1v1h-1zM867 135h1v1h-1zM873 119h1v1h-1zM885 131h1v1h-1zM849 147h1v1h-1zM857 132h1v1h-1zM851 148h1v1h-1zM865 142h1v1h-1zM883 137h1v1h-1zM835 142h1v1h-1zM857 146h1v1h-1zM876 126h1v1h-1z" fill="#98AEE5"/><path d="M893 257h1v1h-1zM851 170h1v1h-1zM884 213h1v1h-1zM843 165h1v1h-1zM844 163h1v1h-1zM890 245h1v1h-1zM883 208h1v1h-1zM873 187h1v1h-1zM890 219h1v1h-1zM849 169h1v1h-1zM892 246h1v1h-1zM892 246h1v1h-1zM839 170h1v1h-1zM885 249h1v1h-1zM877 214h1v1h-1zM860 168h1v1h-1zM891 257h1v1h-1zM892 256h1v1h-1zM895 226h1v1h-1zM887 253h1v1h-1zM867 179h1v1h-1zM881 204h1v1h-1zM882 212h1v1h-1zM896 248h1v1h-1zM873 205h1v1h-1zM887 206h1v1h-1zM876 197h1v1h-1zM859 187h1v1h-1zM871 199h1v1h-1zM847 159h1v1h-1zM852 174h1v1h-1zM890 219h1v1h-1zM892 260h1v1h-1zM893 262h1v1h-1zM884 197h1v1h-1zM874 185h1v1h-1zM888 260h1v1h-1zM862 187h1v1h-1zM883 217h1v1h-1zM855 185h1v1h-1zM875 197h1v1h-1zM870 206h1v1h-1zM885 243h1v1h-1zM849 163h1v1h-1zM871 187h1v1h-1zM873 205h1v1h-1zM866 180h1v1h-1zM867 197h1v1h-1zM880 191h1v1h-1zM894 239h1v1h-1zM854 166h1v1h-1zM861 186h1v1h-1zM850 168h1v1h-1zM872 208h1v1h-1zM853 170h1v1h-1zM869 201h1v1h-1zM850 171h1v1h-1zM878 196h1v1h-1zM861 176h1v1h-1zM872 182h1v1h-1zM887 226h1v1h-1zM894 231h1v1h-1zM880 218h1v1h-1zM894 256h1v1h-1zM866 186h1v1h-1zM899 247h1v1h-1zM881 222h1v1h-1zM861 185h1v1h-1zM848 177h1v1h-1zM862 172h1v1h-1zM895 259h1v1h-1zM893 226h1v1h-1zM840 162h1v1h-1zM871 195h1v1h-1zM865 193h1v1h-1zM884 197h1v1h-1zM836 169h1v1h-1zM880 197h1v1h-1zM864 178h1v1h-1zM836 166h1v1h-1zM847 178h1v1h-1zM859 171h1v1h-1zM871 202h1v1h-1zM848 161h1v1h-1zM897 235h1v1h-1zM870 187h1v1h-1zM891 236h1v1h-1zM885 240h1v1h-1zM864 190h1v1h-1zM864 192h1v1h-1zM875 191h1v1h-1zM896 230h1v1h-1zM844 167h1v1h-1zM855 178h1v1h-1zM884 197h1v1h-1zM896 232h1v1h-1zM882 231h1v1h-1zM859 184h1v1h-1zM880 220h1v1h-1zM859 188h1v1h-1zM881 216h1v1h-1zM845 174h1v1h-1zM877 218h1v1h-1zM872 193h1v1h-1zM876 203h1v1h-1zM890 234h1v1h-1zM848 174h1v1h-1zM881 233h1v1h-1zM890 266h1v1h-1zM895 261h1v1h-1zM894 257h1v1h-1zM848 178h1v1h-1zM838 156h1v1h-1zM873 209h1v1h-1zM888 250h1v1h-1zM849 173h1v1h-1zM899 250h1v1h-1zM886 207h1v1h-1zM856 186h1v1h-1zM894 242h1v1h-1zM870 207h1v1h-1zM864 177h1v1h-1zM880 216h1v1h-1zM886 241h1v1h-1zM890 211h1v1h-1zM879 230h1v1h-1zM882 226h1v1h-1zM889 255h1v1h-1zM846 169h1v1h-1zM896 230h1v1h-1zM855 174h1v1h-1zM863 191h1v1h-1zM847 169h1v1h-1zM843 175h1v1h-1zM855 186h1v1h-1zM850 164h1v1h-1zM887 212h1v1h-1zM855 179h1v1h-1zM884 248h1v1h-1zM892 231h1v1h-1zM868 189h1v1h-1zM845 165h1v1h-1zM857 184h1v1h-1zM860 192h1v1h-1zM880 221h1v1h-1zM895 235h1v1h-1zM884 218h1v1h-1zM891 236h1v1h-1zM884 208h1v1h-1zM870 187h1v1h-1zM862 183h1v1h-1zM897 249h1v1h-1zM890 232h1v1h-1zM890 215h1v1h-1zM873 212h1v1h-1zM878 222h1v1h-1zM855 179h1v1h-1zM890 253h1v1h-1zM885 204h1v1h-1zM858 175h1v1h-1zM887 227h1v1h-1zM892 224h1v1h-1zM865 186h1v1h-1zM882 205h1v1h-1zM863 172h1v1h-1zM843 171h1v1h-1zM890 245h1v1h-1zM880 217h1v1h-1zM859 182h1v1h-1zM868 202h1v1h-1zM840 172h1v1h-1zM896 247h1v1h-1zM856 178h1v1h-1zM875 216h1v1h-1zM876 206h1v1h-1zM850 176h1v1h-1zM844 177h1v1h-1zM868 193h1v1h-1zM864 184h1v1h-1zM856 171h1v1h-1zM889 237h1v1h-1zM867 197h1v1h-1zM865 200h1v1h-1zM836 157h1v1h-1zM888 208h1v1h-1zM881 216h1v1h-1zM884 246h1v1h-1zM884 243h1v1h-1zM840 175h1v1h-1zM892 230h1v1h-1zM893 258h1v1h-1zM855 170h1v1h-1zM864 197h1v1h-1zM840 159h1v1h-1zM881 198h1v1h-1zM875 218h1v1h-1zM843 170h1v1h-1zM880 213h1v1h-1zM893 236h1v1h-1zM841 170h1v1h-1zM889 254h1v1h-1zM858 187h1v1h-1zM881 230h1v1h-1zM868 190h1v1h-1zM886 210h1v1h-1zM875 217h1v1h-1zM869 205h1v1h-1zM889 252h1v1h-1zM863 193h1v1h-1zM866 176h1v1h-1zM884 240h1v1h-1zM858 167h1v1h-1zM860 175h1v1h-1zM874 188h1v1h-1zM893 224h1v1h-1zM870 190h1v1h-1zM848 163h1v1h-1zM876 200h1v1h-1zM871 205h1v1h-1zM872 202h1v1h-1zM883 196h1v1h-1zM883 196h1v1h-1zM897 240h1v1h-1zM846 176h1v1h-1zM868 185h1v1h-1zM837 170h1v1h-1zM854 178h1v1h-1zM878 212h1v1h-1zM865 195h1v1h-1zM892 259h1v1h-1zM869 205h1v1h-1zM856 172h1v1h-1zM851 167h1v1h-1zM851 167h1v1h-1zM889 213h1v1h-1zM897 231h1v1h-1zM846 173h1v1h-1zM875 197h1v1h-1zM893 254h1v1h-1zM874 205h1v1h-1zM855 183h1v1h-1zM845 160h1v1h-1zM878 212h1v1h-1zM877 218h1v1h-1zM839 156h1v1h-1zM888 259h1v1h-1zM890 223h1v1h-1zM895 246h1v1h-1zM892 235h1v1h-1zM873 205h1v1h-1zM856 183h1v1h-1zM889 226h1v1h-1zM849 181h1v1h-1zM868 176h1v1h-1zM879 202h1v1h-1zM858 171h1v1h-1zM843 166h1v1h-1zM863 174h1v1h-1zM887 214h1v1h-1zM891 216h1v1h-1zM874 200h1v1h-1zM865 188h1v1h-1zM899 240h1v1h-1zM859 168h1v1h-1zM853 165h1v1h-1zM885 218h1v1h-1zM852 170h1v1h-1zM861 187h1v1h-1zM858 177h1v1h-1zM897 232h1v1h-1zM875 190h1v1h-1zM892 231h1v1h-1zM848 161h1v1h-1zM848 173h1v1h-1zM888 212h1v1h-1zM860 188h1v1h-1zM835 166h1v1h-1zM873 190h1v1h-1zM890 215h1v1h-1zM882 227h1v1h-1zM860 186h1v1h-1zM886 226h1v1h-1zM854 183h1v1h-1zM864 181h1v1h-1zM836 157h1v1h-1zM871 204h1v1h-1zM876 199h1v1h-1zM894 221h1v1h-1zM898 243h1v1h-1zM851 171h1v1h-1zM877 203h1v1h-1zM854 174h1v1h-1zM869 202h1v1h-1zM882 242h1v1h-1zM837 157h1v1h-1zM893 221h1v1h-1zM874 214h1v1h-1zM861 179h1v1h-1zM889 220h1v1h-1zM881 222h1v1h-1zM838 171h1v1h-1zM839 169h1v1h-1zM841 161h1v1h-1zM880 224h1v1h-1zM882 235h1v1h-1zM885 232h1v1h-1zM870 191h1v1h-1zM849 179h1v1h-1zM887 208h1v1h-1zM875 193h1v1h-1zM879 202h1v1h-1zM853 184h1v1h-1zM872 191h1v1h-1zM872 193h1v1h-1zM885 219h1v1h-1zM875 206h1v1h-1zM838 161h1v1h-1zM837 169h1v1h-1zM884 196h1v1h-1zM883 213h1v1h-1zM895 239h1v1h-1zM852 171h1v1h-1zM875 187h1v1h-1zM897 233h1v1h-1zM879 192h1v1h-1zM871 207h1v1h-1zM881 220h1v1h-1zM844 176h1v1h-1zM855 184h1v1h-1zM846 179h1v1h-1zM863 184h1v1h-1zM881 217h1v1h-1zM853 174h1v1h-1zM881 238h1v1h-1zM872 198h1v1h-1zM887 211h1v1h-1zM884 213h1v1h-1zM890 212h1v1h-1zM841 165h1v1h-1zM897 232h1v1h-1zM892 261h1v1h-1zM867 183h1v1h-1zM884 199h1v1h-1zM876 197h1v1h-1zM872 187h1v1h-1zM886 226h1v1h-1zM890 220h1v1h-1zM883 198h1v1h-1zM867 191h1v1h-1zM854 173h1v1h-1zM890 229h1v1h-1zM886 244h1v1h-1zM839 171h1v1h-1zM883 246h1v1h-1zM881 218h1v1h-1zM869 205h1v1h-1zM868 200h1v1h-1zM887 203h1v1h-1zM837 154h1v1h-1zM897 249h1v1h-1zM853 182h1v1h-1zM861 169h1v1h-1zM865 198h1v1h-1zM875 188h1v1h-1zM863 173h1v1h-1zM887 220h1v1h-1zM881 210h1v1h-1zM873 212h1v1h-1zM886 204h1v1h-1zM844 163h1v1h-1zM886 226h1v1h-1zM868 204h1v1h-1zM840 172h1v1h-1zM888 245h1v1h-1zM878 191h1v1h-1zM893 256h1v1h-1zM877 201h1v1h-1zM858 177h1v1h-1zM895 238h1v1h-1zM869 194h1v1h-1zM876 201h1v1h-1zM896 230h1v1h-1zM835 158h1v1h-1zM891 266h1v1h-1zM871 209h1v1h-1zM887 203h1v1h-1zM880 210h1v1h-1zM877 205h1v1h-1zM853 170h1v1h-1zM865 198h1v1h-1zM878 194h1v1h-1zM855 180h1v1h-1zM888 232h1v1h-1zM890 213h1v1h-1zM856 174h1v1h-1zM849 174h1v1h-1zM868 201h1v1h-1zM896 250h1v1h-1zM894 229h1v1h-1zM888 258h1v1h-1zM853 184h1v1h-1zM858 181h1v1h-1zM839 156h1v1h-1zM894 225h1v1h-1zM889 250h1v1h-1zM862 188h1v1h-1zM885 223h1v1h-1zM896 239h1v1h-1zM895 249h1v1h-1zM873 198h1v1h-1zM848 175h1v1h-1zM884 248h1v1h-1zM885 215h1v1h-1zM881 196h1v1h-1zM878 202h1v1h-1zM897 232h1v1h-1zM882 226h1v1h-1zM885 233h1v1h-1zM841 173h1v1h-1zM880 221h1v1h-1zM842 176h1v1h-1zM889 223h1v1h-1zM888 217h1v1h-1zM890 226h1v1h-1zM867 194h1v1h-1zM875 203h1v1h-1zM845 173h1v1h-1zM871 186h1v1h-1zM881 228h1v1h-1zM859 184h1v1h-1zM895 234h1v1h-1zM841 173h1v1h-1zM878 199h1v1h-1zM851 168h1v1h-1zM850 161h1v1h-1zM892 219h1v1h-1zM891 243h1v1h-1zM889 243h1v1h-1zM899 258h1v1h-1zM885 214h1v1h-1zM849 182h1v1h-1zM854 173h1v1h-1zM873 193h1v1h-1zM886 237h1v1h-1zM855 176h1v1h-1zM870 180h1v1h-1zM879 218h1v1h-1zM880 223h1v1h-1zM888 241h1v1h-1zM862 174h1v1h-1zM884 219h1v1h-1zM861 188h1v1h-1zM845 161h1v1h-1zM893 255h1v1h-1zM855 185h1v1h-1zM859 175h1v1h-1zM837 154h1v1h-1zM868 202h1v1h-1zM869 195h1v1h-1zM836 165h1v1h-1zM887 211h1v1h-1zM875 197h1v1h-1zM854 181h1v1h-1zM871 185h1v1h-1zM874 209h1v1h-1zM869 203h1v1h-1zM875 206h1v1h-1zM854 179h1v1h-1zM867 198h1v1h-1zM843 157h1v1h-1zM854 183h1v1h-1zM891 240h1v1h-1zM881 202h1v1h-1zM882 201h1v1h-1zM892 243h1v1h-1zM884 204h1v1h-1zM848 172h1v1h-1zM857 169h1v1h-1zM874 197h1v1h-1zM864 180h1v1h-1zM896 253h1v1h-1zM891 232h1v1h-1zM893 248h1v1h-1zM894 261h1v1h-1zM892 254h1v1h-1zM863 187h1v1h-1zM850 163h1v1h-1zM890 231h1v1h-1zM884 231h1v1h-1zM894 232h1v1h-1zM896 247h1v1h-1zM864 193h1v1h-1zM838 170h1v1h-1zM836 164h1v1h-1zM888 231h1v1h-1zM884 225h1v1h-1zM874 206h1v1h-1zM847 179h1v1h-1zM836 160h1v1h-1zM892 258h1v1h-1zM865 177h1v1h-1zM841 158h1v1h-1zM858 179h1v1h-1zM861 171h1v1h-1zM870 192h1v1h-1zM889 245h1v1h-1zM859 191h1v1h-1zM865 176h1v1h-1zM864 180h1v1h-1zM866 201h1v1h-1zM893 243h1v1h-1zM888 261h1v1h-1zM856 185h1v1h-1zM885 232h1v1h-1zM894 263h1v1h-1zM843 168h1v1h-1zM888 231h1v1h-1zM862 194h1v1h-1zM862 187h1v1h-1zM873 182h1v1h-1zM846 166h1v1h-1zM871 201h1v1h-1zM892 243h1v1h-1zM864 181h1v1h-1zM889 218h1v1h-1zM846 172h1v1h-1zM887 231h1v1h-1zM879 224h1v1h-1zM850 179h1v1h-1zM893 253h1v1h-1zM864 177h1v1h-1zM855 174h1v1h-1zM880 204h1v1h-1zM885 221h1v1h-1zM877 208h1v1h-1zM888 214h1v1h-1zM890 252h1v1h-1zM875 213h1v1h-1zM890 250h1v1h-1zM844 175h1v1h-1zM871 207h1v1h-1zM858 187h1v1h-1zM872 195h1v1h-1zM858 174h1v1h-1zM867 193h1v1h-1zM852 180h1v1h-1zM886 207h1v1h-1zM870 200h1v1h-1zM887 205h1v1h-1zM867 192h1v1h-1zM855 176h1v1h-1zM897 257h1v1h-1zM891 241h1v1h-1zM883 199h1v1h-1zM855 173h1v1h-1zM863 195h1v1h-1zM885 221h1v1h-1zM879 224h1v1h-1zM893 224h1v1h-1zM868 183h1v1h-1zM886 227h1v1h-1zM892 232h1v1h-1zM899 255h1v1h-1zM880 232h1v1h-1zM879 230h1v1h-1zM869 202h1v1h-1zM862 184h1v1h-1zM877 210h1v1h-1zM856 169h1v1h-1zM850 171h1v1h-1zM859 172h1v1h-1zM851 182h1v1h-1zM873 202h1v1h-1zM861 176h1v1h-1zM840 162h1v1h-1zM864 175h1v1h-1zM872 187h1v1h-1zM881 200h1v1h-1zM890 231h1v1h-1zM886 241h1v1h-1zM883 211h1v1h-1zM842 177h1v1h-1zM890 249h1v1h-1zM865 182h1v1h-1zM857 188h1v1h-1zM887 210h1v1h-1zM860 181h1v1h-1zM849 171h1v1h-1zM855 173h1v1h-1zM845 163h1v1h-1zM858 184h1v1h-1zM880 201h1v1h-1zM857 178h1v1h-1zM887 245h1v1h-1zM871 209h1v1h-1zM838 164h1v1h-1zM843 161h1v1h-1zM848 176h1v1h-1zM856 166h1v1h-1zM874 206h1v1h-1zM874 213h1v1h-1zM857 175h1v1h-1zM865 186h1v1h-1zM864 192h1v1h-1zM884 211h1v1h-1zM851 178h1v1h-1zM879 194h1v1h-1zM871 198h1v1h-1zM851 171h1v1h-1zM881 195h1v1h-1zM887 240h1v1h-1zM890 224h1v1h-1zM887 223h1v1h-1zM897 237h1v1h-1zM835 173h1v1h-1zM850 176h1v1h-1zM877 208h1v1h-1zM855 182h1v1h-1zM887 241h1v1h-1zM858 191h1v1h-1zM841 172h1v1h-1zM851 168h1v1h-1zM877 210h1v1h-1zM881 228h1v1h-1zM870 191h1v1h-1zM891 253h1v1h-1zM870 184h1v1h-1zM850 169h1v1h-1zM876 187h1v1h-1zM888 220h1v1h-1zM884 236h1v1h-1zM877 192h1v1h-1zM888 221h1v1h-1zM873 201h1v1h-1zM866 184h1v1h-1zM863 177h1v1h-1zM855 179h1v1h-1zM891 228h1v1h-1zM896 246h1v1h-1zM844 167h1v1h-1zM871 204h1v1h-1zM888 208h1v1h-1zM893 231h1v1h-1zM879 203h1v1h-1zM879 215h1v1h-1zM884 211h1v1h-1zM882 240h1v1h-1zM888 215h1v1h-1zM883 229h1v1h-1zM866 183h1v1h-1zM892 215h1v1h-1zM863 194h1v1h-1zM874 188h1v1h-1zM869 178h1v1h-1zM867 199h1v1h-1zM840 159h1v1h-1zM894 227h1v1h-1zM883 210h1v1h-1zM886 219h1v1h-1zM870 178h1v1h-1zM888 221h1v1h-1zM865 189h1v1h-1zM870 195h1v1h-1zM876 192h1v1h-1zM870 195h1v1h-1zM884 222h1v1h-1zM858 169h1v1h-1zM866 202h1v1h-1zM889 218h1v1h-1zM894 236h1v1h-1zM889 242h1v1h-1zM892 248h1v1h-1zM875 210h1v1h-1zM890 246h1v1h-1zM862 192h1v1h-1zM882 243h1v1h-1zM879 217h1v1h-1zM847 178h1v1h-1zM864 183h1v1h-1zM892 260h1v1h-1zM895 236h1v1h-1zM899 255h1v1h-1zM873 193h1v1h-1zM886 231h1v1h-1zM887 205h1v1h-1zM891 234h1v1h-1zM882 223h1v1h-1zM852 171h1v1h-1zM894 221h1v1h-1zM876 199h1v1h-1zM896 240h1v1h-1zM888 259h1v1h-1zM885 233h1v1h-1zM892 264h1v1h-1zM865 176h1v1h-1zM860 183h1v1h-1zM863 191h1v1h-1zM885 225h1v1h-1zM877 210h1v1h-1zM872 202h1v1h-1zM883 231h1v1h-1zM886 229h1v1h-1zM866 191h1v1h-1zM847 172h1v1h-1zM857 186h1v1h-1zM862 195h1v1h-1zM889 258h1v1h-1zM891 265h1v1h-1zM870 197h1v1h-1zM845 173h1v1h-1zM876 210h1v1h-1zM853 184h1v1h-1zM889 266h1v1h-1zM842 171h1v1h-1zM866 200h1v1h-1zM891 266h1v1h-1zM863 184h1v1h-1zM894 251h1v1h-1zM882 200h1v1h-1zM877 218h1v1h-1zM873 191h1v1h-1zM836 157h1v1h-1zM889 227h1v1h-1zM890 256h1v1h-1zM892 225h1v1h-1zM886 241h1v1h-1zM895 253h1v1h-1zM881 198h1v1h-1zM868 199h1v1h-1zM852 170h1v1h-1zM855 172h1v1h-1zM868 199h1v1h-1zM874 210h1v1h-1zM871 184h1v1h-1zM855 179h1v1h-1zM894 262h1v1h-1zM897 239h1v1h-1zM884 242h1v1h-1zM879 225h1v1h-1zM898 240h1v1h-1zM870 194h1v1h-1zM873 197h1v1h-1zM843 176h1v1h-1zM868 201h1v1h-1zM857 170h1v1h-1zM881 214h1v1h-1zM868 186h1v1h-1zM871 184h1v1h-1zM847 171h1v1h-1zM836 157h1v1h-1zM887 205h1v1h-1zM895 238h1v1h-1zM878 189h1v1h-1zM884 247h1v1h-1zM892 241h1v1h-1zM890 260h1v1h-1zM898 239h1v1h-1zM873 198h1v1h-1zM878 204h1v1h-1zM850 168h1v1h-1zM889 251h1v1h-1zM872 192h1v1h-1zM846 159h1v1h-1zM878 192h1v1h-1zM848 176h1v1h-1zM880 217h1v1h-1zM857 183h1v1h-1zM862 176h1v1h-1zM886 233h1v1h-1zM888 262h1v1h-1zM883 241h1v1h-1zM897 253h1v1h-1zM887 245h1v1h-1zM882 217h1v1h-1zM889 261h1v1h-1zM860 187h1v1h-1zM879 210h1v1h-1zM857 189h1v1h-1zM878 188h1v1h-1zM849 169h1v1h-1zM885 218h1v1h-1zM845 175h1v1h-1zM887 244h1v1h-1zM845 165h1v1h-1zM871 203h1v1h-1zM881 194h1v1h-1zM885 216h1v1h-1zM885 212h1v1h-1zM835 173h1v1h-1zM899 240h1v1h-1zM853 164h1v1h-1zM872 201h1v1h-1zM886 213h1v1h-1zM890 238h1v1h-1zM890 224h1v1h-1zM848 171h1v1h-1zM892 222h1v1h-1zM885 214h1v1h-1zM894 253h1v1h-1zM872 208h1v1h-1zM878 221h1v1h-1zM870 194h1v1h-1zM867 190h1v1h-1zM848 175h1v1h-1zM884 225h1v1h-1zM878 193h1v1h-1zM848 177h1v1h-1zM862 186h1v1h-1zM895 237h1v1h-1zM893 244h1v1h-1zM887 232h1v1h-1zM880 210h1v1h-1zM883 243h1v1h-1zM890 237h1v1h-1zM848 175h1v1h-1zM862 193h1v1h-1zM885 218h1v1h-1zM888 224h1v1h-1zM866 191h1v1h-1zM855 184h1v1h-1zM869 201h1v1h-1zM860 181h1v1h-1zM893 236h1v1h-1zM852 170h1v1h-1zM849 165h1v1h-1zM888 257h1v1h-1zM877 194h1v1h-1zM854 172h1v1h-1zM853 169h1v1h-1zM856 178h1v1h-1zM892 265h1v1h-1zM869 190h1v1h-1zM892 225h1v1h-1zM880 232h1v1h-1zM885 211h1v1h-1zM895 226h1v1h-1zM875 218h1v1h-1zM875 217h1v1h-1zM897 261h1v1h-1zM886 237h1v1h-1zM871 186h1v1h-1zM866 178h1v1h-1zM888 222h1v1h-1zM874 184h1v1h-1zM896 255h1v1h-1zM843 172h1v1h-1zM849 178h1v1h-1zM842 161h1v1h-1zM884 213h1v1h-1zM841 166h1v1h-1zM880 222h1v1h-1zM893 240h1v1h-1zM894 252h1v1h-1zM894 248h1v1h-1zM853 174h1v1h-1zM854 173h1v1h-1zM854 173h1v1h-1zM872 207h1v1h-1zM891 211h1v1h-1zM835 163h1v1h-1zM893 253h1v1h-1zM866 186h1v1h-1zM838 174h1v1h-1zM846 163h1v1h-1zM871 186h1v1h-1zM889 253h1v1h-1zM894 229h1v1h-1zM850 172h1v1h-1zM894 257h1v1h-1zM892 215h1v1h-1zM891 213h1v1h-1zM846 176h1v1h-1zM891 253h1v1h-1zM856 166h1v1h-1zM894 239h1v1h-1zM843 159h1v1h-1zM845 178h1v1h-1zM888 204h1v1h-1zM875 207h1v1h-1zM896 235h1v1h-1zM860 185h1v1h-1zM867 190h1v1h-1zM882 217h1v1h-1zM856 184h1v1h-1zM859 184h1v1h-1zM852 169h1v1h-1zM839 156h1v1h-1zM881 219h1v1h-1zM870 180h1v1h-1zM864 171h1v1h-1zM894 238h1v1h-1zM846 167h1v1h-1zM897 256h1v1h-1zM868 198h1v1h-1zM888 234h1v1h-1zM874 185h1v1h-1zM887 244h1v1h-1zM874 196h1v1h-1zM875 203h1v1h-1zM894 260h1v1h-1zM859 177h1v1h-1zM885 208h1v1h-1zM869 182h1v1h-1zM839 162h1v1h-1zM893 224h1v1h-1zM857 180h1v1h-1zM887 208h1v1h-1zM887 227h1v1h-1zM867 192h1v1h-1zM891 262h1v1h-1zM880 191h1v1h-1zM890 251h1v1h-1zM843 177h1v1h-1zM877 192h1v1h-1zM881 232h1v1h-1zM852 169h1v1h-1zM855 174h1v1h-1zM892 249h1v1h-1zM860 183h1v1h-1zM893 243h1v1h-1zM848 161h1v1h-1zM877 218h1v1h-1zM877 195h1v1h-1zM853 167h1v1h-1zM848 179h1v1h-1zM887 207h1v1h-1zM893 230h1v1h-1zM896 247h1v1h-1zM890 259h1v1h-1zM863 188h1v1h-1zM881 220h1v1h-1zM881 195h1v1h-1zM884 227h1v1h-1zM886 219h1v1h-1zM890 252h1v1h-1zM880 212h1v1h-1zM869 197h1v1h-1zM888 229h1v1h-1zM880 237h1v1h-1zM884 241h1v1h-1zM838 168h1v1h-1zM888 228h1v1h-1zM881 192h1v1h-1zM868 198h1v1h-1zM877 209h1v1h-1zM867 186h1v1h-1zM872 195h1v1h-1zM871 185h1v1h-1zM889 207h1v1h-1zM877 211h1v1h-1zM858 183h1v1h-1zM851 174h1v1h-1zM848 176h1v1h-1zM884 244h1v1h-1zM880 217h1v1h-1zM878 226h1v1h-1zM836 157h1v1h-1zM880 199h1v1h-1zM879 222h1v1h-1zM880 208h1v1h-1zM882 205h1v1h-1zM886 226h1v1h-1zM889 242h1v1h-1zM882 212h1v1h-1z" fill="#F4F080"/><path d="M835 237 C843 248 850 262 851.5 277 C852 290 849 298 846 301 L835 303 Z" fill="#F5F22A"/><path d="M835 275 C840 272 846 273 847 277 C846 282 841 285 835 287 Z" fill="#FFFFFF"/></svg>
<div class="b" style="left:388px;top:403px;width:512px;height:1px;background:#E8E4C8"></div>
<div class="b" style="left:388px;top:404px;width:512px;height:1px;background:#222222"></div>
<div class="b" style="left:388px;top:405px;width:512px;height:84px;background:#FFFFFF"></div>
<div class="b" style="left:388px;top:405px;width:1px;height:84px;background:#5E5C55"></div>
<div class="b" style="left:389px;top:405px;width:1px;height:84px;background:#C9C7BE"></div>
<div class="mono" style="left:394.5px;top:462px;letter-spacing:0.07px">Changing Discretization Scheme for Pressure to PRESTO!</div>
<div class="mono" style="left:394.5px;top:476px;letter-spacing:0.07px">Changing Discretization Scheme for Volume Fraction to Geo-Reconstruct</div>
<div class="b" style="left:370px;top:107px;width:465px;height:357px;background:#5066D2;border-radius:6px 6px 0 0"></div>
<div class="b" style="left:371px;top:130px;width:1px;height:333px;background:#6A83DE"></div>
<div class="b" style="left:372px;top:130px;width:1px;height:332px;background:#8AA3EA"></div>
<div class="b" style="left:833px;top:130px;width:1px;height:333px;background:#6A83DE"></div>
<div class="b" style="left:832px;top:130px;width:1px;height:332px;background:#8AA3EA"></div>
<div class="b" style="left:372px;top:461px;width:461px;height:1px;background:#7890E2"></div>
<div class="b" style="left:371px;top:462px;width:463px;height:1px;background:#5F77D8"></div>
<div class="b" style="left:371px;top:108px;width:463px;height:25px;background:linear-gradient(180deg,#A9BDEE 0px,#8AA5E6 2px,#7896E0 6px,#7794DF 16px,#7DA0EA 22px,#6A86D8 25px);border-radius:5px 5px 0 0"></div>
<div class="b" style="left:374px;top:113px;width:14px;height:13px;background:#2B2B28;border:1px solid #55554E;box-sizing:border-box"></div>
<svg class="b" style="left:375px;top:115px" width="12" height="9"><ellipse cx="6" cy="4.5" rx="5" ry="3.5" fill="#1DD21D"/><ellipse cx="7" cy="4.5" rx="3.2" ry="2.2" fill="#F2E51A"/><circle cx="3" cy="4" r="1.6" fill="#000"/><path d="M8 6 h3 v1.5 h-3z" fill="#E02020"/><path d="M3 7 h4 v1 h-4z" fill="#2050E0"/></svg>
<div class="mono" style="left:392px;top:115px;color:#E4EAF8;font-family:'Liberation Mono',monospace;font-weight:normal;-webkit-text-stroke:0.45px #E4EAF8;font-size:12.6px;letter-spacing:-0.56px;line-height:14px">Pressure Inlet</div>
<div class="b" style="left:813px;top:112px;width:17px;height:17px;background:linear-gradient(180deg,#C98690,#B76A77);border:1px solid #D8E0F4;border-radius:3px;box-sizing:border-box"></div>
<svg class="b" style="left:816px;top:115px" width="11" height="11"><path d="M1.5 1.5 L9.5 9.5 M9.5 1.5 L1.5 9.5" stroke="#fff" stroke-width="1.6"/></svg>
<div class="b" style="left:373px;top:133px;width:459px;height:328px;background:#ECE9D8"></div>
<div class="t" style="left:378px;top:139.0px;">Zone Name</div>
<div class="t" style="left:676px;top:139.0px;">Phase</div>
<div class="b field" style="left:378px;top:150px;width:292px;height:23px;background:#FFFFFF"><div class="ftext" style="top:4px">inlet</div></div>
<div class="b field" style="left:676px;top:150px;width:150px;height:23px;background:#ECE9D8"><div class="ftext" style="top:4px">mixture</div></div>
<div class="b" style="left:378px;top:202px;width:449px;height:221px;border-top:1px solid #FFFFFF;border-left:1px solid #FFFFFF;border-right:1px solid #716F64;border-bottom:1px solid #716F64;box-sizing:border-box"></div>
<div class="b" style="left:379px;top:203px;width:447px;height:219px;border-right:1px solid #ACA899;border-bottom:1px solid #ACA899;box-sizing:border-box"></div>
<div class="b" style="left:438px;top:186px;width:42px;height:16px;border-top:1px solid #FFFFFF;border-right:1px solid #716F64;box-sizing:border-box"></div>
<div class="t" style="left:438px;width:42px;text-align:center;top:190.5px">Thermal</div>
<div class="b" style="left:481px;top:186px;width:49px;height:16px;border-top:1px solid #FFFFFF;border-right:1px solid #716F64;box-sizing:border-box"></div>
<div class="t" style="left:481px;width:49px;text-align:center;top:190.5px">Radiation</div>
<div class="b" style="left:531px;top:186px;width:42px;height:16px;border-top:1px solid #FFFFFF;border-right:1px solid #716F64;box-sizing:border-box"></div>
<div class="t" style="left:531px;width:42px;text-align:center;top:190.5px">Species</div>
<div class="b" style="left:574px;top:186px;width:36px;height:16px;border-top:1px solid #FFFFFF;border-right:1px solid #716F64;box-sizing:border-box"></div>
<div class="t" style="left:574px;width:36px;text-align:center;top:190.5px">DPM</div>
<div class="b" style="left:611px;top:186px;width:55px;height:16px;border-top:1px solid #FFFFFF;border-right:1px solid #716F64;box-sizing:border-box"></div>
<div class="t" style="left:611px;width:55px;text-align:center;top:190.5px">Multiphase</div>
<div class="b" style="left:667px;top:186px;width:36px;height:16px;border-top:1px solid #FFFFFF;border-right:1px solid #716F64;box-sizing:border-box"></div>
<div class="t" style="left:667px;width:36px;text-align:center;top:190.5px">UDS</div>
<div class="b" style="left:378px;top:184px;width:59px;height:19px;background:#ECE9D8;border-top:1px solid #FFFFFF;border-left:1px solid #FFFFFF;border-right:1px solid #716F64;box-sizing:border-box"></div>
<div class="t" style="left:385.5px;top:188.5px;">Momentum</div>
<div class="t" style="right:347px;top:213.0px">Reference Frame</div>
<div class="b combo" style="left:556px;top:212px;width:262px;height:18px;background:#ECE9D8"><div class="ctext" style="top:3.5px">Absolute</div><div class="cbtn" style="height:16px"><svg width="9" height="6" viewBox="0 0 9 6"><path d="M1 1 L4.5 4.5 L8 1" stroke="#4D6185" stroke-width="1.9" fill="none"/></svg></div></div>
<div class="t" style="right:347px;top:236.5px">Gauge Total Pressure (atm)</div>
<div class="b field" style="left:556px;top:235px;width:115px;height:23px;background:#FFFFFF"><div class="ftext" style="top:4px">1</div></div>
<div class="b combo" style="left:676px;top:235px;width:140px;height:18px;background:#ECE9D8"><div class="ctext" style="top:3.5px">constant</div><div class="cbtn" style="height:16px"><svg width="9" height="6" viewBox="0 0 9 6"><path d="M1 1 L4.5 4.5 L8 1" stroke="#4D6185" stroke-width="1.9" fill="none"/></svg></div></div>
<div class="t" style="right:347px;top:265.5px">Supersonic/Initial Gauge Pressure (atm)</div>
<div class="b field" style="left:556px;top:264px;width:115px;height:23px;background:#FFFFFF"><div class="ftext" style="top:4px">0</div></div>
<div class="b combo" style="left:676px;top:265px;width:140px;height:17px;background:#ECE9D8"><div class="ctext" style="top:3.0px">constant</div><div class="cbtn" style="height:15px"><svg width="9" height="6" viewBox="0 0 9 6"><path d="M1 1 L4.5 4.5 L8 1" stroke="#4D6185" stroke-width="1.9" fill="none"/></svg></div></div>
<div class="t" style="right:347px;top:293.2px">Direction Specification Method</div>
<div class="b combo" style="left:556px;top:293px;width:262px;height:17px;background:#ECE9D8"><div class="ctext" style="top:3.0px">Normal to Boundary</div><div class="cbtn" style="height:15px"><svg width="9" height="6" viewBox="0 0 9 6"><path d="M1 1 L4.5 4.5 L8 1" stroke="#4D6185" stroke-width="1.9" fill="none"/></svg></div></div>
<div class="t" style="left:385px;top:316.0px;">Turbulence</div>
<div class="b" style="left:385px;top:328px;width:434px;height:88px;border-top:1px solid #ACA899;border-left:1px solid #ACA899;border-right:1px solid #FFFFFF;border-bottom:1px solid #FFFFFF;box-sizing:border-box"></div>
<div class="b" style="left:386px;top:329px;width:432px;height:86px;border-top:1px solid #FFFFFF;border-left:1px solid #FFFFFF;border-right:1px solid #ACA899;border-bottom:1px solid #ACA899;box-sizing:border-box"></div>
<div class="t" style="right:354px;top:335.5px">Specification Method</div>
<div class="b combo" style="left:549px;top:334px;width:262px;height:18px;background:#ECE9D8"><div class="ctext" style="top:3.5px">Intensity and Hydraulic Diameter</div><div class="cbtn" style="height:16px"><svg width="9" height="6" viewBox="0 0 9 6"><path d="M1 1 L4.5 4.5 L8 1" stroke="#4D6185" stroke-width="1.9" fill="none"/></svg></div></div>
<div class="t" style="right:220px;top:357.5px">Turbulent Intensity (%)</div>
<div class="b field" style="left:683px;top:357px;width:115px;height:22px;background:#FFFFFF"><div class="ftext" style="top:3px">1</div></div>
<div class="t" style="right:220px;top:386.8px">Hydraulic Diameter (mm)</div>
<div class="b field" style="left:683px;top:386px;width:115px;height:22px;background:#FFFFFF"><div class="ftext" style="top:3px">3</div></div>
<div class="b" style="left:803px;top:368px;width:8px;height:10px;border:1px solid #5A7CA8;border-top-color:#2E5D8E;border-radius:2px;background:linear-gradient(180deg,#fff,#E3E1D6);box-shadow:inset -1px -1px 0 #9DB3D3"></div>
<svg class="b" style="left:806px;top:371px" width="5" height="8"><path d="M1 0.5 V7.5 M1 0.8 H3 Q4.3 0.8 4.3 2.3 Q4.3 3.8 3 3.8 H1" stroke="#000" stroke-width="1.3" fill="none"/></svg>
<div class="b" style="left:803px;top:397px;width:8px;height:10px;border:1px solid #5A7CA8;border-top-color:#2E5D8E;border-radius:2px;background:linear-gradient(180deg,#fff,#E3E1D6);box-shadow:inset -1px -1px 0 #9DB3D3"></div>
<svg class="b" style="left:806px;top:400px" width="5" height="8"><path d="M1 0.5 V7.5 M1 0.8 H3 Q4.3 0.8 4.3 2.3 Q4.3 3.8 3 3.8 H1" stroke="#000" stroke-width="1.3" fill="none"/></svg>
<div class="b" style="left:373px;top:430px;width:459px;height:1px;background:#ACA899"></div>
<div class="b" style="left:373px;top:431px;width:459px;height:1px;background:#FFFFFF"></div>
<div class="b btn" style="left:536px;top:438px;width:36px;height:15px;padding-top:1px;line-height:16px">OK</div>
<div class="b btn" style="left:584px;top:438px;width:36px;height:15px;padding-top:1px;line-height:16px">Cancel</div>
<div class="b btn" style="left:632px;top:438px;width:36px;height:15px;padding-top:1px;line-height:16px">Help</div>
</body></html>
